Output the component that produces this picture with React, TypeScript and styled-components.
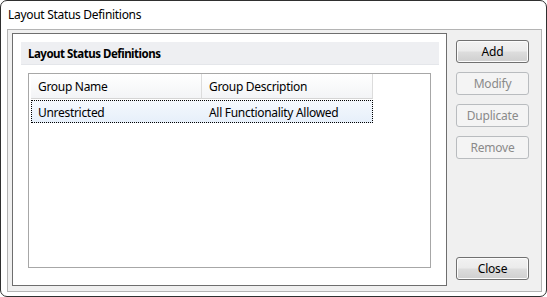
import styled, { createGlobalStyle } from "styled-components";

const GlobalStyle = createGlobalStyle`
  html, body {
    margin: 0;
    padding: 0;
    background: #ffffff;
  }
  body {
    font-family: "Noto Sans", "Open Sans", sans-serif;
    font-size: 12px;
    letter-spacing: -0.3px;
    color: #000000;
  }
`;

const Window = styled.div`
  width: 547px;
  height: 297px;
  box-sizing: border-box;
  border: 1px solid #2f2f2f;
  border-radius: 7px;
  background: #ffffff;
  display: flex;
  flex-direction: column;
  overflow: hidden;
`;

const TitleBar = styled.div`
  height: 28px;
  padding: 0 0 1px 7px;
  box-sizing: border-box;
  display: flex;
  align-items: center;
  font-size: 12px;
  flex-shrink: 0;
`;

const Body = styled.div`
  flex: 1;
  margin: 0 4px 4px 6px;
  border: 1px solid #b4b4b4;
  background: #f0f0f0;
  display: flex;
  padding: 3px 12px 5px 4px;
  gap: 9px;
`;

const GroupBox = styled.div`
  width: 435px;
  box-sizing: border-box;
  border: 1px solid #6e6e6e;
  background: #ffffff;
  padding: 8px 7px 17px 8px;
  display: flex;
  flex-direction: column;
`;

const GroupHeader = styled.div`
  height: 23px;
  background: #eeeff2;
  border-bottom: 1px solid #e4e6ea;
  box-sizing: border-box;
  padding-left: 7px;
  display: flex;
  align-items: center;
  font-weight: 700;
  font-size: 11.5px;
  letter-spacing: -0.5px;
`;

const ListBox = styled.div`
  flex: 1;
  margin: 8px 8px 0 7px;
  border: 1px solid #a7a7a7;
  background: #ffffff;
  display: flex;
  flex-direction: column;
  padding: 0 2px;
`;

const HeaderRow = styled.div`
  display: flex;
  height: 25px;
`;

const HeaderCell = styled.div<{ $w: number }>`
  width: ${(p) => p.$w}px;
  box-sizing: border-box;
  background: linear-gradient(#ffffff, #f3f4f6);
  border-bottom: 1px solid #d5d5d5;
  border-right: 1px solid #dcdcdc;
  padding-left: 7px;
  display: flex;
  align-items: center;
`;

const Row = styled.div<{ $selected?: boolean }>`
  display: flex;
  height: 23px;
  width: 342px;
  box-sizing: border-box;
  margin-top: 1px;
  background: ${(p) => (p.$selected ? "linear-gradient(#f4f8fd, #e6effa)" : "transparent")};
  outline: ${(p) => (p.$selected ? "1px dotted #000000" : "none")};
  outline-offset: -1px;
`;

const Cell = styled.div<{ $w: number }>`
  width: ${(p) => p.$w}px;
  box-sizing: border-box;
  padding-left: 7px;
  padding-top: 1px;
  display: flex;
  align-items: center;
`;

const ButtonColumn = styled.div`
  width: 73px;
  display: flex;
  flex-direction: column;
  gap: 9px;
  padding: 7px 0 6px;
`;

const Button = styled.button<{ $disabled?: boolean }>`
  height: 23px;
  width: 73px;
  box-sizing: border-box;
  border-radius: 3px;
  font-family: "Noto Sans", "Open Sans", sans-serif;
  font-size: 12px;
  letter-spacing: -0.2px;
  padding: 0;
  border: 1px solid ${(p) => (p.$disabled ? "#b9bcbf" : "#707070")};
  color: ${(p) => (p.$disabled ? "#8a8a8a" : "#000000")};
  background: ${(p) =>
    p.$disabled
      ? "#f4f4f4"
      : "linear-gradient(#f2f2f2 0%, #ebebeb 48%, #dddddd 52%, #cfcfcf 100%)"};
  box-shadow: ${(p) => (p.$disabled ? "none" : "inset 0 0 0 1px #fcfcfc")};
`;

const Spacer = styled.div`
  flex: 1;
`;

const rows = [{ name: "Unrestricted", desc: "All Functionality Allowed" }];

export default function App() {
  return (
    <>
      <GlobalStyle />
      <Window>
        <TitleBar>Layout Status Definitions</TitleBar>
        <Body>
          <GroupBox>
            <GroupHeader>Layout Status Definitions</GroupHeader>
            <ListBox>
              <HeaderRow>
                <HeaderCell $w={171}>Group Name</HeaderCell>
                <HeaderCell $w={171}>Group Description</HeaderCell>
              </HeaderRow>
              {rows.map((r) => (
                <Row key={r.name} $selected>
                  <Cell $w={171}>{r.name}</Cell>
                  <Cell $w={171}>{r.desc}</Cell>
                </Row>
              ))}
            </ListBox>
          </GroupBox>
          <ButtonColumn>
            <Button>Add</Button>
            <Button $disabled>Modify</Button>
            <Button $disabled>Duplicate</Button>
            <Button $disabled>Remove</Button>
            <Spacer />
            <Button>Close</Button>
          </ButtonColumn>
        </Body>
      </Window>
    </>
  );
}
